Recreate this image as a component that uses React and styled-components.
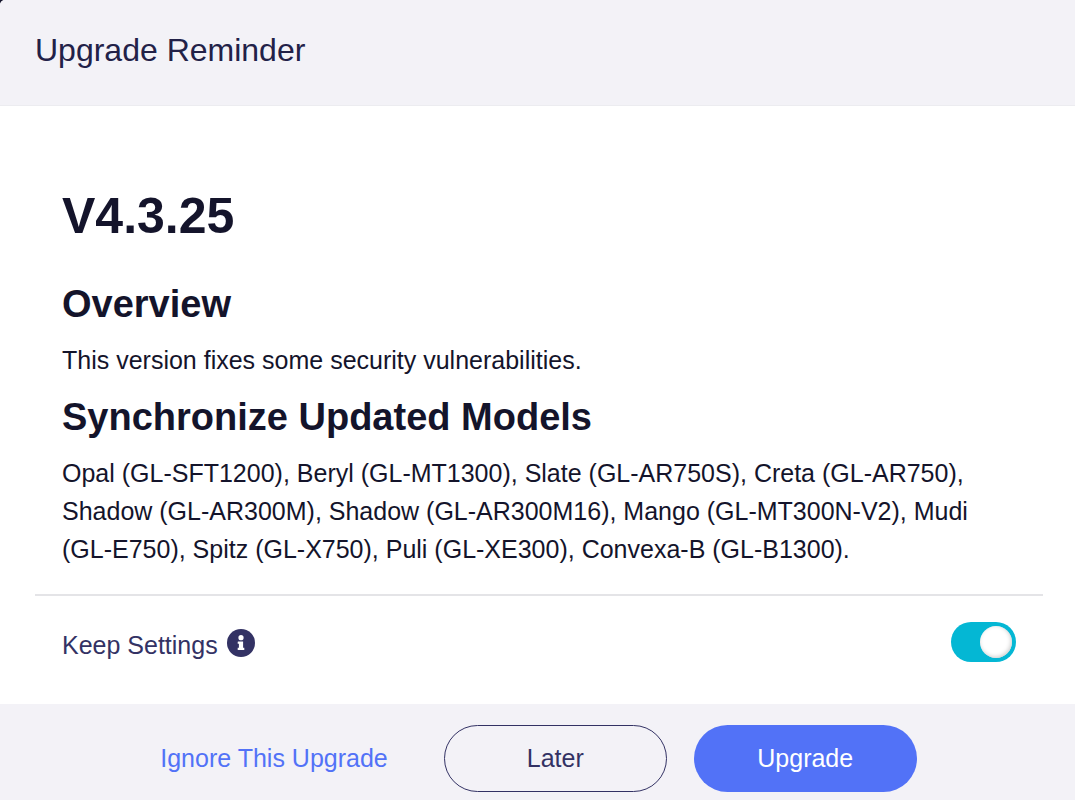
import React, { useState } from "react";
import styled, { createGlobalStyle } from "styled-components";

const GlobalStyle = createGlobalStyle`
  * {
    box-sizing: border-box;
  }
  body {
    margin: 0;
    background: #14142b;
    color: #14142b;
    font-family: "Liberation Sans", Arial, sans-serif;
    font-size: 25px;
  }
`;

const Dialog = styled.main`
  display: flex;
  flex-direction: column;
  min-height: 100vh;
  border-top-left-radius: 5px;
  background: #fff;
  overflow: hidden;
`;

const DialogHeader = styled.header`
  padding: 30px 35px 35px;
  border-bottom: 1px solid #ececf0;
  background: #f3f2f7;
  h1 {
    margin: 0;
    color: #222148;
    font-size: 32px;
    font-weight: 400;
    line-height: 40px;
  }
`;

const DialogBody = styled.div`
  flex: 1;
  padding: 76px 32px 0 35px;
`;

const ReleaseNotes = styled.article`
  padding: 0 27px 26px;
  border-bottom: 2px solid #e4e4e7;
  h2 {
    margin: 0 0 29px;
    font-size: 50px;
    line-height: 68px;
  }
  h3 {
    margin: 0 0 12px;
    font-size: 38px;
    line-height: 50px;
  }
  p {
    margin: 0 0 13px;
    line-height: 38px;
  }
  p:last-of-type {
    margin-bottom: 0;
  }
`;

const SettingRow = styled.div`
  display: flex;
  justify-content: space-between;
  align-items: center;
  padding: 26px 27px;
`;

const SettingLabel = styled.label`
  display: flex;
  align-items: center;
  gap: 9px;
  padding-top: 6px;
  color: #333264;
  line-height: 34px;
  svg {
    width: 28px;
    height: 28px;
    margin-bottom: 4px;
  }
`;

const Switch = styled.input`
  appearance: none;
  display: flex;
  align-items: center;
  width: 65px;
  height: 40px;
  margin: 0;
  padding: 0 4px;
  border-radius: 20px;
  background: #c8c8d2;
  cursor: pointer;
  &::before {
    content: "";
    width: 32px;
    height: 32px;
    border-radius: 50%;
    background: #fff;
    box-shadow: inset -1px -1px 4px #ccc;
  }
  &:checked {
    justify-content: flex-end;
    background: #04b7d4;
  }
`;

const DialogFooter = styled.footer`
  display: flex;
  justify-content: center;
  align-items: center;
  gap: 27px;
  padding: 21px 0 8px;
  background: #f3f2f7;
`;

const Button = styled.button`
  width: 223px;
  height: 67px;
  padding: 0;
  border: 1px solid ${({ $border }) => $border || "transparent"};
  border-radius: 34px;
  background: ${({ $background }) => $background || "transparent"};
  color: ${({ $color }) => $color};
  font-family: inherit;
  font-size: 25px;
  cursor: pointer;
`;

const TextButton = styled(Button)`
  width: auto;
  margin-right: 27px;
  padding: 0 1px;
  white-space: nowrap;
`;

function InfoIcon() {
  return (
    <svg viewBox="0 0 28 28" aria-hidden="true">
      <circle cx="14" cy="14" r="14" fill="#333264" />
      <circle cx="14" cy="8.7" r="2.6" fill="#fff" />
      <path
        d="M11.2 12.4h4.9v6.3h1.2v2.4h-6.6v-2.4h1.2v-3.9h-1.2v-1.9q0-.5.5-.5z"
        fill="#fff"
      />
    </svg>
  );
}

function App() {
  const [keepSettings, setKeepSettings] = useState(true);

  return (
    <Dialog>
      <GlobalStyle />
      <DialogHeader>
        <h1>Upgrade Reminder</h1>
      </DialogHeader>
      <DialogBody>
        <ReleaseNotes>
          <h2>V4.3.25</h2>
          <h3>Overview</h3>
          <p>This version fixes some security vulnerabilities.</p>
          <h3>Synchronize Updated Models</h3>
          <p>
            Opal (GL-SFT1200), Beryl (GL-MT1300), Slate (GL-AR750S), Creta
            (GL-AR750), Shadow (GL-AR300M), Shadow (GL-AR300M16), Mango
            (GL-MT300N-V2), Mudi (GL-E750), Spitz (GL-X750), Puli (GL-XE300),
            Convexa-B (GL-B1300).
          </p>
        </ReleaseNotes>
        <SettingRow>
          <SettingLabel htmlFor="keep-settings">
            Keep Settings
            <InfoIcon />
          </SettingLabel>
          <Switch
            id="keep-settings"
            type="checkbox"
            checked={keepSettings}
            onChange={(e) => setKeepSettings(e.target.checked)}
          />
        </SettingRow>
      </DialogBody>
      <DialogFooter>
        <TextButton type="button" $color="#5272f7">
          Ignore This Upgrade
        </TextButton>
        <Button type="button" $color="#333264" $border="#333264">
          Later
        </Button>
        <Button type="button" $color="#fff" $background="#5272f7">
          Upgrade
        </Button>
      </DialogFooter>
    </Dialog>
  );
}

export default App;
